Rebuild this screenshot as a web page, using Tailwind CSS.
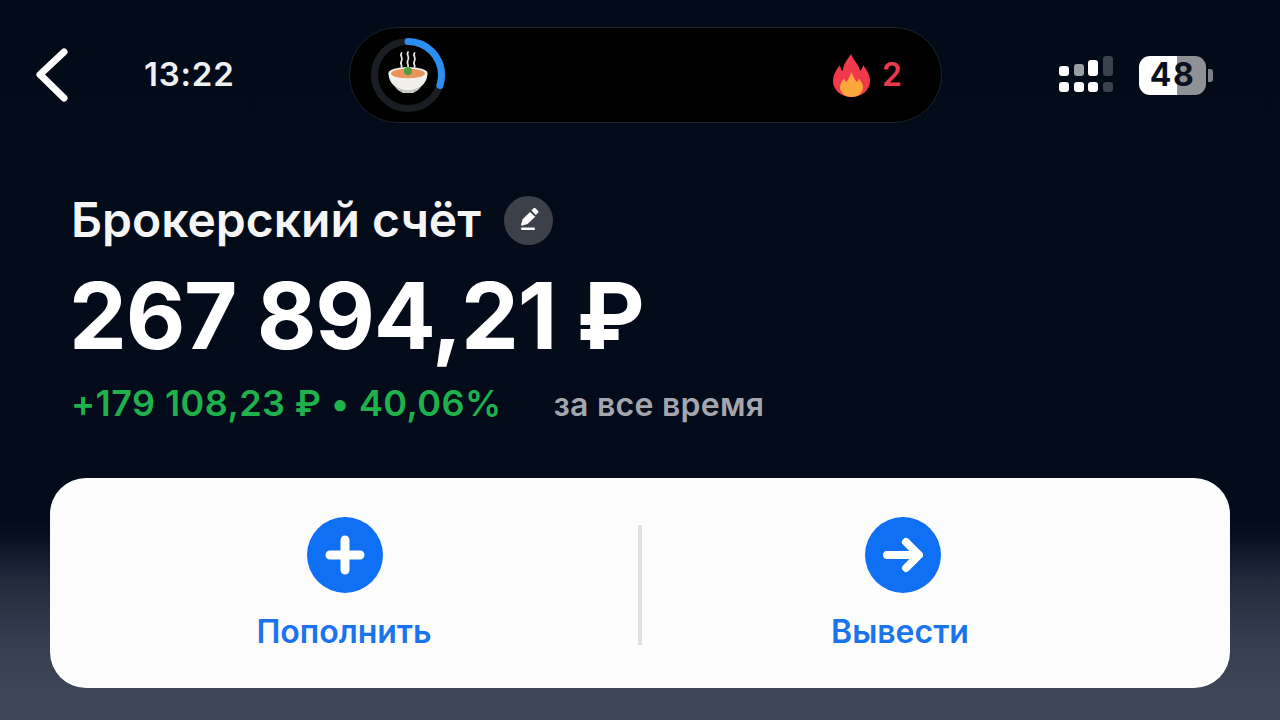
<!DOCTYPE html>
<html lang="ru">
<head>
    <meta charset="UTF-8">
    <meta name="viewport" content="width=device-width, initial-scale=1.0">
    <title>Брокерский счёт</title>
    <script src="https://cdn.jsdelivr.net/npm/@tailwindcss/browser@4"></script>
</head>
<body class="w-[1280px] h-[720px] overflow-hidden font-['Inter',sans-serif] bg-[linear-gradient(180deg,#030a18_0px,#040b1a_518px,#0a1222_540px,#1f2838_575px,#252e3d_590px,#353e4e_640px,#3e4757_700px)]">
    <!-- status bar -->
    <div class="flex items-center h-[96px] mt-[27px] pl-[34px]">
        <svg class="w-[36px] h-[56px]" viewBox="0 0 36 56" fill="none" stroke="#fff" stroke-width="7" stroke-linecap="round" stroke-linejoin="round"><path d="M30 5 L6 27.500 L30 51"/></svg>
        <span class="ml-[74px] w-[205px] text-[33px] font-semibold text-[#eef0f3] tracking-[0.8px]">13:22</span>

        <div class="relative flex items-center justify-between w-[593px] h-[96px] rounded-full bg-black border border-[#1b2230] pl-[20px] pr-[39px]">
            <svg class="w-[76px] h-[76px]" viewBox="0 0 76 76" fill="none">
                <circle cx="38" cy="38" r="33.500" stroke="#1a1d22" stroke-width="7"/>
                <circle cx="38" cy="38" r="33.500" stroke="#2a8ff0" stroke-width="7" stroke-linecap="round" pathLength="360" stroke-dasharray="108 360" transform="rotate(-90 38 38)"/>
                <path d="M31.500 16c-2 3 2 5 0 8s1 4 0 6M38 15c-2 3 2 5 0 8s1 5 0 7M44.500 16c-2 3 2 5 0 8s1 4 0 6" stroke="#e6e6e6" stroke-width="1.800" stroke-linecap="round"/>
                <path d="M18.500 36c0 9 6 15 13 16.500l1 3.500h11l1-3.500c7-1.500 13-7.500 13-16.500z" fill="#f1efec"/>
                <path d="M24 48c4 4 8 5 14 5s10-1 14-5c-3 6-8 8-14 8s-11-2-14-8z" fill="#c9c7c4"/>
                <ellipse cx="38" cy="36" rx="19.500" ry="6" fill="#f5f3f0"/>
                <ellipse cx="38" cy="36.500" rx="17" ry="4.800" fill="#e8945a"/>
                <circle cx="38" cy="34" r="4" fill="#4f9e3f"/>
            </svg>
            <div class="flex items-center gap-[12px]">
                <svg class="w-[37px] h-[43px]" viewBox="0 0 37 43">
                    <path d="M18 0C20 6 26 10 27 17 29 15 30 13 30 11 34 16 37 21 37 27 37 36 29 43 18.500 43 8 43 0 36 0 27 0 21 3 16 7 11 7 14 8 16 10 17 10 10 14 6 18 0Z" fill="#f0394b"/>
                    <path d="M18.500 18C20 23 22 25 23.500 28 25 27 25.500 26 26 24.500 28.500 28 30 30 30 33 30 39 25 43 18.500 43 12 43 7 39 7 33 7 30 8.500 28 11 24.500 11.500 26 12 27 13.500 28 15 25 17 23 18.500 18Z" fill="#fda63c"/>
                </svg>
                <span class="w-[20px] text-[32px] leading-none font-semibold text-[#e83a4b]">2</span>
            </div>
        </div>

        <div class="flex flex-col gap-[6px] ml-[117px] -mt-[2px]">
            <div class="flex items-end gap-[4.500px] h-[20px]">
                <div class="w-[10px] h-[10px] rounded-[3px] bg-white"></div>
                <div class="w-[10px] h-[12px] rounded-[3px] bg-[#9a9ea5]"></div>
                <div class="w-[10px] h-[16px] rounded-[3px] bg-white"></div>
                <div class="w-[10px] h-[20px] rounded-[3px] bg-[#3b414d]"></div>
            </div>
            <div class="flex gap-[4.500px]">
                <div class="w-[10px] h-[10px] rounded-[3px] bg-white"></div>
                <div class="w-[10px] h-[10px] rounded-[3px] bg-white"></div>
                <div class="w-[10px] h-[10px] rounded-[3px] bg-white"></div>
                <div class="w-[10px] h-[10px] rounded-[3px] bg-[#3b414d]"></div>
            </div>
        </div>

        <div class="flex items-center gap-[2px] ml-[26.500px]">
            <div class="relative flex items-center justify-center w-[67px] h-[39px] rounded-[11px] overflow-hidden bg-[linear-gradient(90deg,#fff_0%,#fff_57%,#8f9196_57%,#8f9196_100%)]">
                <span class="text-[32px] leading-none font-bold text-[#0b1020] tracking-[1.500px]">48</span>
            </div>
            <div class="w-[5px] h-[13px] rounded-r-[3px] bg-[#7d8087]"></div>
        </div>
    </div>

    <!-- account -->
    <div class="pl-[71px] mt-[71px]">
        <div class="flex items-center gap-[23px] h-[52px]">
            <h1 class="text-[48px] leading-none font-semibold text-[#f5f5f6]">Брокерский счёт</h1>
            <div class="flex items-center justify-center w-[49px] h-[49px] rounded-full bg-[#3c404b]">
                <svg class="w-[24px] h-[24px]" viewBox="0 0 24 24" fill="#fff"><g transform="translate(0 -2)"><path d="M14.500 4.500l2-2.200c.6-.6 1.400-.6 2 0l2.500 2.500c.6.6.6 1.400 0 2l-2.200 2.200z"/><path d="M13 6l5.200 4.700-7.700 7.300-5.700 1.700-.8-.8 1.700-5.700z"/></g><rect x="4" y="19.500" width="14" height="2.500" rx="1.200"/></svg>
            </div>
        </div>
        <div class="mt-[20px] -ml-[2px] text-[92px] leading-[100px] font-bold text-white tracking-[-1.300px]">267 894,21 ₽</div>
        <div class="flex items-baseline mt-[15px]">
            <span class="text-[36px] leading-[44px] font-semibold text-[#1fb14b] tracking-[0.4px]">+179 108,23 ₽ • 40,06%</span>
            <span class="ml-[52px] text-[32px] leading-[44px] font-semibold text-[#a3a6ae] tracking-[0.25px]">за все время</span>
        </div>
    </div>

    <!-- actions -->
    <div class="flex items-center mx-[50px] w-[1180px] h-[210px] mt-[51px] rounded-[36px] bg-[#fcfcfd]">
        <div class="flex flex-col items-center w-[588px] pt-[4px]">
            <div class="flex items-center justify-center w-[76px] h-[76px] ml-[2px] rounded-full bg-[#0f6ff5]">
                <svg class="w-[40px] h-[40px]" viewBox="0 0 40 40" fill="none" stroke="#fff" stroke-width="9" stroke-linecap="round"><path d="M20 5v30M5 20h30"/></svg>
            </div>
            <span class="mt-[17px] text-[32px] leading-[44px] font-semibold text-[#1a74ee]">Пополнить</span>
        </div>
        <div class="w-[4px] h-[120px] mt-[3px] bg-[#dfe0e2]"></div>
        <div class="flex flex-col items-center w-[588px] pr-[66px] pt-[4px]">
            <div class="flex items-center justify-center w-[76px] h-[76px] rounded-full bg-[#0f6ff5]">
                <svg class="w-[40px] h-[36px]" viewBox="0 0 40 36" fill="none" stroke="#fff" stroke-width="8" stroke-linecap="round" stroke-linejoin="round"><path d="M4 18h31M23 5l13 13-13 13"/></svg>
            </div>
            <span class="mt-[17px] mr-[6px] text-[32px] leading-[44px] font-semibold text-[#1a74ee]">Вывести</span>
        </div>
    </div>
</body>
</html>
